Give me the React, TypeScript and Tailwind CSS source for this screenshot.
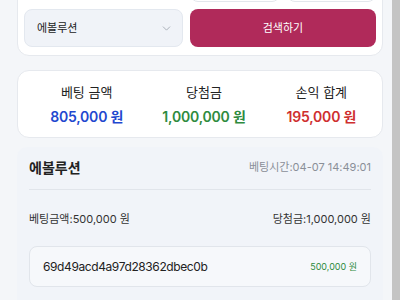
import React from "react";
import { ChevronDown } from "lucide-react";

const font = { fontFamily: 'Inter, "Noto Sans CJK KR", sans-serif' };

const App = () => {
  return (
    <div className="relative h-[300px] w-[400px] overflow-hidden bg-[#f4f6f9]" style={font}>
      <div className="pl-[17px] pr-[17px]">
        {/* search card */}
        <div className="-mt-[45px] rounded-[12px] border border-[#e6e9ee] bg-white px-[6px] py-[8px]">
          <div className="grid grid-cols-[159px_1fr] gap-[7px]">
            <div className="h-[38px]" />
            <div className="grid grid-cols-2 gap-[7px]">
              <div className="h-[38px] rounded-[8px] border border-[#e3e7ec] bg-white" />
              <div className="h-[38px] rounded-[8px] border border-[#e3e7ec] bg-white" />
            </div>
          </div>
          <div className="mt-[7px] grid grid-cols-[159px_1fr] gap-[7px]">
            <div className="flex h-[38px] items-center justify-between rounded-[8px] border border-[#e3e8ef] bg-[#f0f3f8] pl-[12px] pr-[9px]">
              <span className="text-[11px] text-[#222]">에볼루션</span>
              <ChevronDown className="h-[13px] w-[13px] text-[#9aa1ab]" strokeWidth={1.5} />
            </div>
            <button className="flex h-[38px] items-center justify-center rounded-[8px] bg-[#b02a5a] text-[11px] text-white">
              검색하기
            </button>
          </div>
        </div>

        {/* summary card */}
        <div className="mt-[14px] grid h-[68px] grid-cols-3 items-center rounded-[12px] border border-[#e6e9ee] bg-white pl-[10px] pr-[2px]">
          <div className="flex flex-col items-center">
            <span className="text-[13px] leading-[20px] text-[#222]">베팅 금액</span>
            <span className="mt-[5px] text-[14px] font-semibold leading-[20px] tracking-[-0.2px] text-[#1f48cf]">805,000 원</span>
          </div>
          <div className="flex flex-col items-center">
            <span className="text-[13px] leading-[20px] text-[#222]">당첨금</span>
            <span className="mt-[5px] text-[14px] font-semibold leading-[20px] tracking-[-0.2px] text-[#2e8b3e]">1,000,000 원</span>
          </div>
          <div className="flex flex-col items-center">
            <span className="text-[13px] leading-[20px] text-[#222]">손익 합계</span>
            <span className="mt-[5px] text-[14px] font-semibold leading-[20px] tracking-[-0.2px] text-[#cf2f2f]">195,000 원</span>
          </div>
        </div>

        {/* bet item */}
        <div className="mt-[9px] rounded-t-[10px] bg-[#f1f4f9] px-[12px] pt-[8px] pb-[20px]">
          <div className="flex h-[24px] items-center justify-between">
            <span className="text-[14px] font-bold text-[#222]">에볼루션</span>
            <span className="text-[11px] text-[#8a8f98]">베팅시간:04-07 14:49:01</span>
          </div>
          <div className="mt-[10px] h-px bg-[#e1e5eb]" />
          <div className="flex items-center justify-between pt-[19px] text-[11px] leading-[20px] text-[#333]">
            <span>베팅금액:500,000 원</span>
            <span>당첨금:1,000,000 원</span>
          </div>
          <div className="mt-[17px] flex h-[41px] items-center justify-between rounded-[8px] border border-[#e1e5eb] bg-[#f6f8fb] pl-[13px] pr-[13px]">
            <span className="text-[12px] tracking-[-0.4px] text-[#222]">69d49acd4a97d28362dbec0b</span>
            <span className="text-[9px] text-[#2e8b3e]">500,000 원</span>
          </div>
        </div>
      </div>

      {/* scrollbar */}
      <div className="absolute right-0 top-0 h-full w-[8px] bg-[#c4c4c4]" />
    </div>
  );
};

export default App;
